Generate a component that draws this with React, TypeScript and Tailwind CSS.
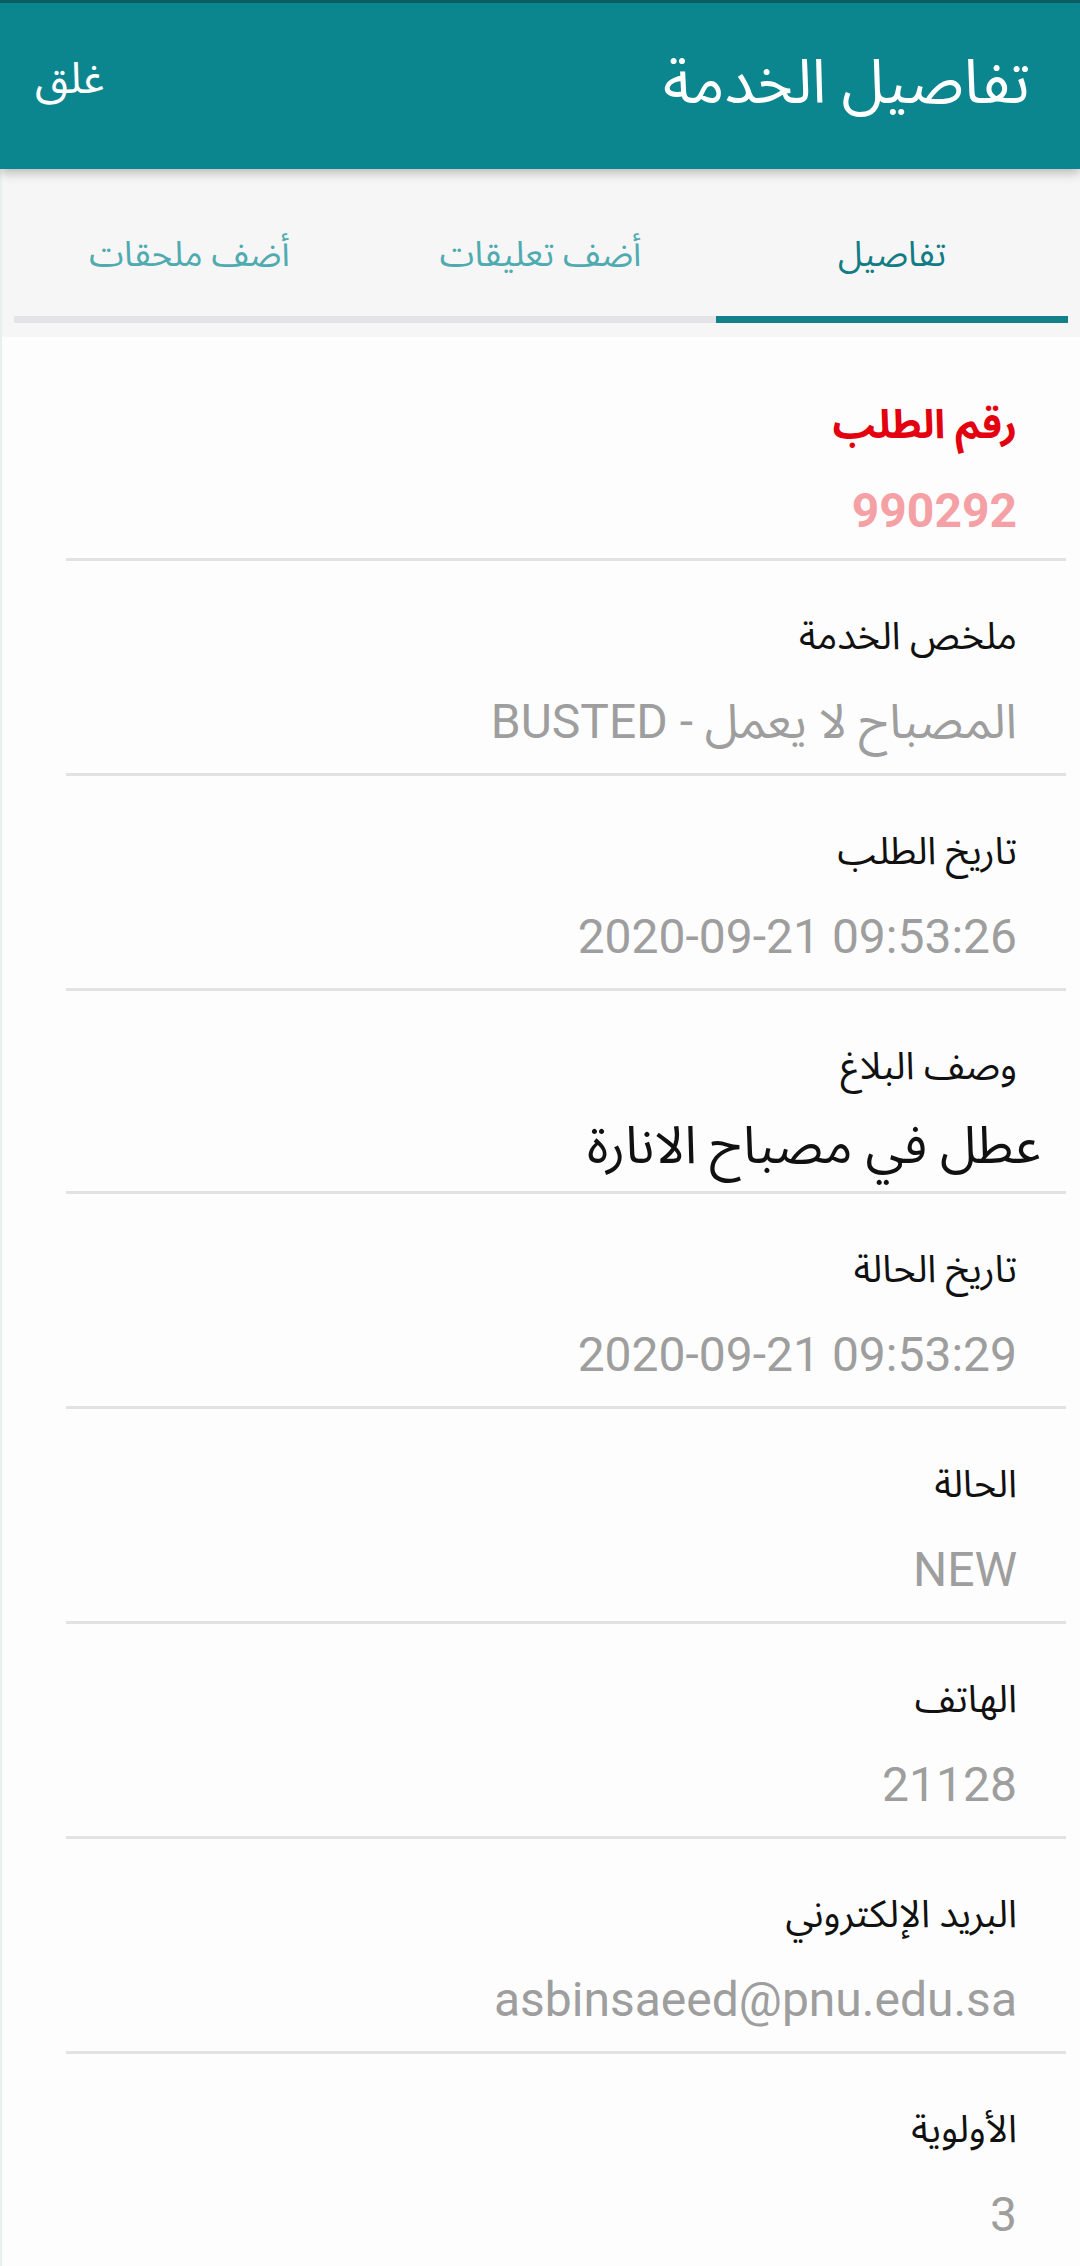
import React from 'react';

const FONT = "font-['Roboto','Noto_Sans_Arabic','DejaVu_Sans',sans-serif]";

const FIELDS = [
  { label: 'ملخص الخدمة', value: 'المصباح لا يعمل - BUSTED' },
  { label: 'تاريخ الطلب', value: '2020-09-21 09:53:26' },
  { label: 'وصف البلاغ', value: 'عطل في مصباح الانارة', big: true },
  { label: 'تاريخ الحالة', value: '2020-09-21 09:53:29' },
  { label: 'الحالة', value: 'NEW' },
  { label: 'الهاتف', value: '21128' },
  { label: 'البريد الإلكتروني', value: 'asbinsaeed@pnu.edu.sa' },
  { label: 'الأولوية', value: '3', last: true },
];

const TABS = [
  { title: 'تفاصيل', active: true },
  { title: 'أضف تعليقات', active: false },
  { title: 'أضف ملحقات', active: false },
];

export default function App() {
  return (
    <div dir="rtl" className={`w-[1080px] min-h-[2266px] bg-[#fdfdfd] ${FONT}`}>
      {/* top bar */}
      <header className="relative z-10 h-[169px] bg-[#0c868e] border-t-[3px] border-[#0a5d63] shadow-[0_4px_10px_rgba(0,0,0,0.25)] flex items-center justify-between pr-[50px] pl-[35px]">
        <h1 className="text-[61px] leading-none text-white font-normal -mt-[8px]">تفاصيل الخدمة</h1>
        <button className="text-[43px] leading-none text-white -mt-[16px]">غلق</button>
      </header>

      {/* tabs */}
      <nav className="h-[168px] bg-[#f6f6f7] pt-[58px] px-[12px] border-l-[2px] border-[#e8efee]">
        <div className="flex h-[96px]">
          {TABS.map((t, i) => (
            <div key={i} className={`flex-1 flex flex-col ${i === 0 ? 'flex-[1_1_352px]' : 'flex-[1_1_351px]'}`}>
              <div className="flex-1 flex items-start justify-center">
                <span className={`text-[35px] leading-[56px] ${t.active ? 'text-[#127c85]' : 'text-[#4fabb0]'}`}>{t.title}</span>
              </div>
              <div className={`h-[7px] ${t.active ? 'bg-[#128189]' : 'bg-[#e4e4e6]'}`} />
            </div>
          ))}
        </div>
      </nav>

      {/* details */}
      <main className="pl-[64px] pr-[14px] border-l-[2px] border-[#e8efee]">
        <div className="h-[224px] pt-[58px] pr-[49px] border-b-[3px] border-[#e2e2e2]">
          <div className="text-[40px] leading-[60px] font-bold text-[#e3000f]">رقم الطلب</div>
          <div className="mt-[23px] text-[48px] leading-[66px] font-bold text-[#f5a0a4]">990292</div>
        </div>
        {FIELDS.map((f, i) => (
          <div
            key={i}
            className={`pt-[45px] pr-[49px] ${f.big ? 'h-[203px]' : 'h-[215px]'} ${f.last ? '' : 'border-b-[3px] border-[#e2e2e2]'}`}
          >
            <div className="text-[38px] leading-[60px] text-[#111]">{f.label}</div>
            {f.big ? (
              <div className="mt-[17px] -mr-[24px] text-[52px] leading-[66px] text-[#111]">{f.value}</div>
            ) : (
              <div dir="auto" className="mt-[23px] text-[48px] leading-[66px] text-[#9e9e9e] text-right">{f.value}</div>
            )}
          </div>
        ))}
      </main>
    </div>
  );
}
